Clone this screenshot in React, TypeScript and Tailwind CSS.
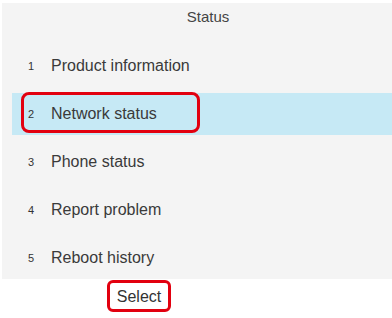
const ITEMS = [
  { n: 1, label: "Product information" },
  { n: 2, label: "Network status", selected: true },
  { n: 3, label: "Phone status" },
  { n: 4, label: "Report problem" },
  { n: 5, label: "Reboot history" },
];

export default function App() {
  return (
    <div
      className="w-[392px] h-[318px] bg-white overflow-hidden text-[#3a3a3a]"
      style={{ fontFamily: '"Liberation Sans", Arial, sans-serif' }}
    >
      <div className="ml-[2px] mt-[3px] h-[276px] bg-[#f4f4f4] flex flex-col overflow-hidden">
        <div className="h-[39px] shrink-0 pl-[22px] pt-[4px] text-center text-[15px] leading-[20px] text-[#444]">
          Status
        </div>
        {ITEMS.map((item) => (
          <div key={item.n} className="h-[48px] shrink-0 py-[3px] pl-[10px]">
            <div
              className={
                "relative h-[42px] flex items-center pl-[16px] " +
                (item.selected ? "bg-[#c6e9f5]" : "")
              }
            >
              <span className="w-[23px] text-[11px] text-[#333]">{item.n}</span>
              <span className="text-[16px]">{item.label}</span>
              {item.selected && (
                <div className="absolute left-[9px] top-[-1px] w-[179px] h-[41px] border-[3px] border-[#e2000f] rounded-[8px]" />
              )}
            </div>
          </div>
        ))}
      </div>
      <div className="ml-[107px] mt-[1px] w-[64px] h-[32px] pt-[2px] border-[3px] border-[#e2000f] rounded-[6px] flex items-center justify-center text-[16px] text-[#333]">
        Select
      </div>
    </div>
  );
}
